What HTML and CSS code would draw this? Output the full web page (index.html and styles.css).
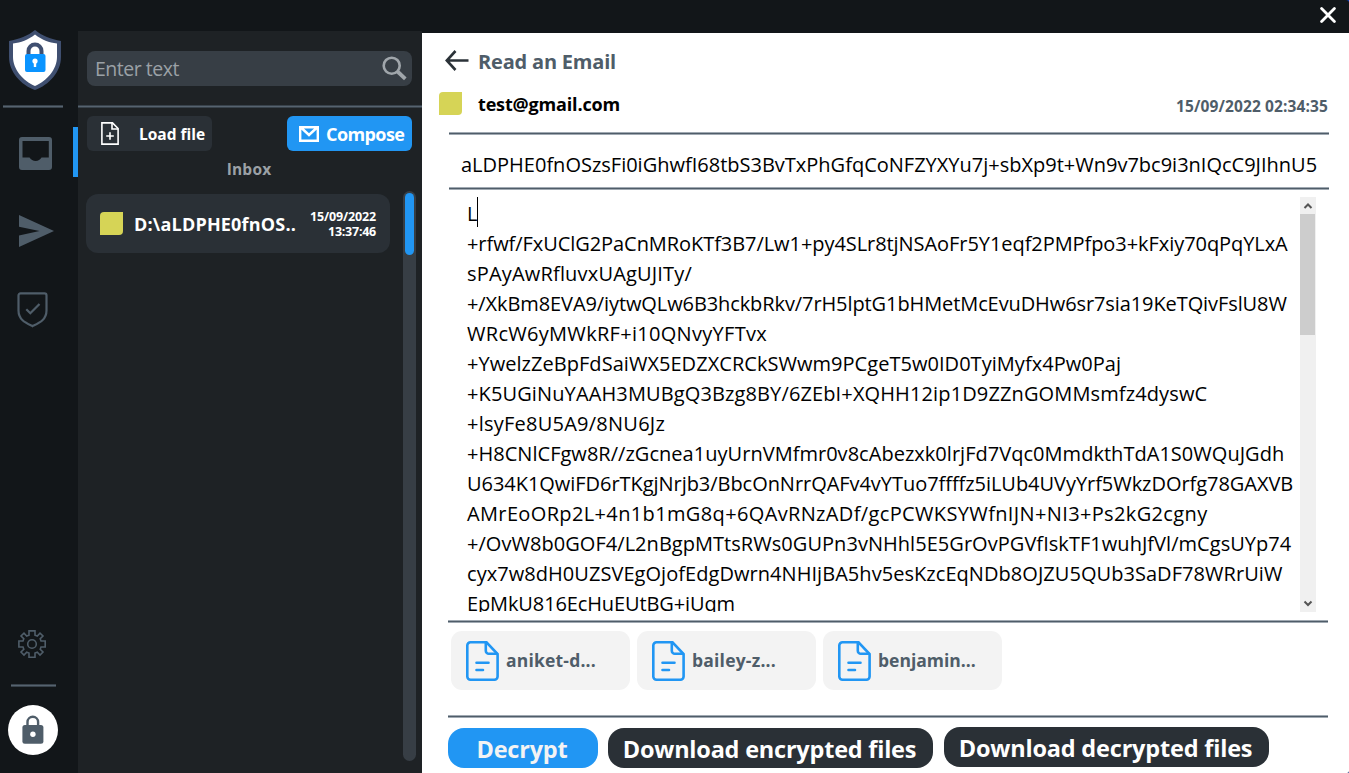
FILE: index.html
```
<!DOCTYPE html>
<html lang="en">
<head>
<meta charset="utf-8">
<title>Read an Email</title>
<link rel="stylesheet" href="styles.css">
</head>
<body>
<div class="app">
  <nav class="sidebar">
    <svg class="logo" viewBox="0 0 52 60" width="52" height="60">
      <path d="M26 0C33 6 42 9 52 11V27C52 42 40 55 26 60C12 55 0 42 0 27V11C10 9 19 6 26 0Z" fill="#3f4f70"/>
      <path d="M26 4.500C33 10 40 12.500 48 13.500V27C48 39 38 51 26 56C14 51 4 39 4 27V13.500C12 12.500 19 10 26 4.500Z" fill="#fff"/>
      <path d="M19.500 25V21a6.500 6.500 0 0 1 13 0V25" fill="none" stroke="#3f4f70" stroke-width="4"/>
      <rect x="16" y="24" width="20.500" height="18" rx="2" fill="#0a94ff"/>
      <circle cx="26" cy="31" r="2.600" fill="#fff"/><rect x="24.800" y="31" width="2.400" height="6" fill="#fff"/>
    </svg>
    <div class="rule rule-top"></div>
    <div class="nav-item active">
      <svg viewBox="0 0 33 33" width="33" height="33"><path fill-rule="evenodd" fill="#4f5d69" d="M3 0H30a3 3 0 0 1 3 3V30a3 3 0 0 1-3 3H3a3 3 0 0 1-3-3V3a3 3 0 0 1 3-3ZM3.500 4V20.500H10.500C12 22.500 14 24 16.700 24S21 22.500 22.500 20.500H29.800V4Z"/></svg>
    </div>
    <div class="nav-item send">
      <svg viewBox="0 0 35 32" width="35" height="32"><path fill="#4f5d69" d="M0 0L35 16L0 32V20.500L20.500 16L0 11.800Z"/></svg>
    </div>
    <div class="nav-item verify">
      <svg viewBox="0 0 31 36" width="31" height="36" fill="none" stroke="#4f5d69" stroke-width="2.200"><path d="M3.500 1.400H27.500a2 2 0 0 1 2 2V18.500C29.500 28 22 31 15.500 34.200C9 31 1.500 28 1.500 18.500V3.400a2 2 0 0 1 2-2Z"/><path d="M9.300 17.200L13.300 21.300L22.500 12"/></svg>
    </div>
    <div class="nav-item gear">
      <svg viewBox="0 0 28 28" width="28" height="28" fill="none" stroke="#4f5d69" stroke-width="1.600"><path d="M11 0.900H17V5.200L19.300 6L22 3.200L25 6L22.200 8.800L23 11H27.200V17H23L22.200 19.200L25 22L22 25L19.300 22.200L17 23V27.200H11V23L8.700 22.200L6 25L3 22L5.800 19.200L5 17H0.900V11H5L5.800 8.800L3 6L6 3.200L8.700 6L11 5.200Z"/><circle cx="14" cy="14" r="4.300"/></svg>
    </div>
    <div class="rule rule-bottom"></div>
    <div class="lock">
      <svg viewBox="0 0 22 29" width="22" height="29"><path d="M5.500 11V7a5.300 5.300 0 0 1 10.600 0V11" fill="none" stroke="#4f5d69" stroke-width="2.400"/><rect x="0.400" y="10" width="21" height="18.700" rx="2.500" fill="#4f5d69"/><circle cx="10.900" cy="19.300" r="2.700" fill="#fff"/></svg>
    </div>
  </nav>

  <section class="list">
    <div class="search">
      <span class="t placeholder">Enter text</span>
      <svg viewBox="0 0 25 25" width="25" height="25" fill="none" stroke="#a0a6ab"><circle cx="9.700" cy="9.700" r="8" stroke-width="2.600"/><path d="M15.500 15.500L23.300 22.800" stroke-width="3.800"/></svg>
    </div>
    <div class="rule rule-list"></div>
    <div class="actions">
      <button class="btn load">
        <svg viewBox="0 0 18 23" width="18" height="23" fill="none" stroke="#fff" stroke-width="1.600"><path d="M0.900 0.900H11.500L17.100 6.500V22.100H0.900Z"/><path d="M11 1V7H17"/><path d="M9 10.300V17.700M5.200 14H12.800"/></svg>
        <span class="t load-t">Load file</span>
      </button>
      <button class="btn compose">
        <svg viewBox="0 0 20 16" width="20" height="16" fill="none" stroke="#fff" stroke-width="2.400"><path d="M1.200 1.200H18.800V14.800H1.200ZM2 1.500L10 9L18 1.500"/></svg>
        <span class="t compose-t">Compose</span>
      </button>
    </div>
    <h2 class="inbox-title"><span class="t inbox-t">Inbox</span></h2>
    <div class="mails">
      <div class="mail">
        <i class="tag"></i>
        <span class="t mail-name">D:\aLDPHE0fnOS..</span>
        <span class="mail-date"><span class="t day">15/09/2022</span><span class="t hour">13:37:46</span></span>
      </div>
      <div class="track"><div class="thumb"></div></div>
    </div>
  </section>

  <div class="right">
    <header class="topbar"><svg viewBox="0 0 16 16" width="16" height="16" stroke="#fff" stroke-width="2.800" stroke-linecap="round"><path d="M1.600 1.600L14.400 14.400M14.400 1.600L1.600 14.400"/></svg></header>
    <main class="reader">
      <div class="title-row">
        <svg viewBox="0 0 24 21" width="24" height="21" fill="none" stroke="#2b3238" stroke-width="2.600"><path d="M23.500 10.500H2M10.500 1L1.800 10.500L10.500 20"/></svg>
        <h1 class="t title">Read an Email</h1>
      </div>
      <div class="from-row">
        <i class="tag"></i>
        <span class="t from">test@gmail.com</span>
        <span class="t date">15/09/2022 02:34:35</span>
      </div>
      <div class="line line-a"></div>
      <div class="subject"><span class="t">aLDPHE0fnOSzsFi0iGhwfI68tbS3BvTxPhGfqCoNFZYXYu7j+sbXp9t+Wn9v7bc9i3nIQcC9JIhnU5</span></div>
      <div class="line line-b"></div>
      <div class="message">
        <div class="text">
          <p><span class="t">L</span><i class="caret"></i></p>
          <p><span class="t m2">+rfwf/FxUClG2PaCnMRoKTf3B7/Lw1+py4SLr8tjNSAoFr5Y1eqf2PMPfpo3+kFxiy70qPqYLxA</span></p>
          <p><span class="t m3">sPAyAwRfluvxUAgUJITy/</span></p>
          <p><span class="t m4">+/XkBm8EVA9/iytwQLw6B3hckbRkv/7rH5lptG1bHMetMcEvuDHw6sr7sia19KeTQivFslU8W</span></p>
          <p><span class="t m5">WRcW6yMWkRF+i10QNvyYFTvx</span></p>
          <p><span class="t m6">+YwelzZeBpFdSaiWX5EDZXCRCkSWwm9PCgeT5w0ID0TyiMyfx4Pw0Paj</span></p>
          <p><span class="t m7">+K5UGiNuYAAH3MUBgQ3Bzg8BY/6ZEbI+XQHH12ip1D9ZZnGOMMsmfz4dyswC</span></p>
          <p><span class="t m8">+lsyFe8U5A9/8NU6Jz</span></p>
          <p><span class="t m9">+H8CNlCFgw8R//zGcnea1uyUrnVMfmr0v8cAbezxk0lrjFd7Vqc0MmdkthTdA1S0WQuJGdh</span></p>
          <p><span class="t m10">U634K1QwiFD6rTKgjNrjb3/BbcOnNrrQAFv4vYTuo7ffffz5iLUb4UVyYrf5WkzDOrfg78GAXVB</span></p>
          <p><span class="t m11">AMrEoORp2L+4n1b1mG8q+6QAvRNzADf/gcPCWKSYWfnIJN+NI3+Ps2kG2cgny</span></p>
          <p><span class="t m12">+/OvW8b0GOF4/L2nBgpMTtsRWs0GUPn3vNHhl5E5GrOvPGVfIskTF1wuhJfVl/mCgsUYp74</span></p>
          <p><span class="t m13">cyx7w8dH0UZSVEgOjofEdgDwrn4NHIjBA5hv5esKzcEqNDb8OJZU5QUb3SaDF78WRrUiW</span></p>
          <p><span class="t m14">EpMkU816EcHuEUtBG+iUqm</span></p>
        </div>
        <div class="scroll">
          <svg viewBox="0 0 16 17" width="16" height="17" fill="none" stroke="#555" stroke-width="2"><path d="M4.500 11L8 7.500L11.500 11"/></svg>
          <div class="scroll-thumb"></div>
          <svg class="down" viewBox="0 0 16 17" width="16" height="17" fill="none" stroke="#555" stroke-width="2"><path d="M4.500 6.500L8 10L11.500 6.500"/></svg>
        </div>
      </div>
      <div class="line line-c"></div>
      <div class="files">
        <div class="file"><svg viewBox="0 0 33 40" width="33" height="40" fill="none" stroke="#2196f3" stroke-width="2.600"><path d="M4.500 1.300H20.500L31.600 13V35.500a3.200 3.200 0 0 1-3.200 3.200H4.500a3.200 3.200 0 0 1-3.200-3.200V4.500a3.200 3.200 0 0 1 3.200-3.200Z"/><path d="M19.800 1.500V9.800a3 3 0 0 0 3 3H31.500"/><path d="M10.500 21.800H22.500M10.500 29H17" stroke-linecap="round"/></svg><span class="t f1">aniket-d...</span></div>
        <div class="file"><svg viewBox="0 0 33 40" width="33" height="40" fill="none" stroke="#2196f3" stroke-width="2.600"><path d="M4.500 1.300H20.500L31.600 13V35.500a3.200 3.200 0 0 1-3.200 3.200H4.500a3.200 3.200 0 0 1-3.200-3.200V4.500a3.200 3.200 0 0 1 3.200-3.200Z"/><path d="M19.800 1.500V9.800a3 3 0 0 0 3 3H31.500"/><path d="M10.500 21.800H22.500M10.500 29H17" stroke-linecap="round"/></svg><span class="t f2">bailey-z...</span></div>
        <div class="file"><svg viewBox="0 0 33 40" width="33" height="40" fill="none" stroke="#2196f3" stroke-width="2.600"><path d="M4.500 1.300H20.500L31.600 13V35.500a3.200 3.200 0 0 1-3.200 3.200H4.500a3.200 3.200 0 0 1-3.200-3.200V4.500a3.200 3.200 0 0 1 3.200-3.200Z"/><path d="M19.800 1.500V9.800a3 3 0 0 0 3 3H31.500"/><path d="M10.500 21.800H22.500M10.500 29H17" stroke-linecap="round"/></svg><span class="t f3">benjamin...</span></div>
      </div>
      <div class="line line-d"></div>
      <div class="buttons">
        <button class="big decrypt"><span class="t b1">Decrypt</span></button>
        <button class="big enc"><span class="t b2">Download encrypted files</span></button>
        <button class="big dec"><span class="t b3">Download decrypted files</span></button>
      </div>
    </main>
  </div>
</div>
</body>
</html>
```
FILE: styles.css
```
* { box-sizing: border-box; }
body { margin: 0; background: #0a3fc4; font-family: "Open Sans", "Noto Sans", sans-serif; }
h1, h2, p { margin: 0; }
svg { display: block; flex: none; }
.t { display: inline-block; white-space: nowrap; flex: none; }
button { border: 0; padding: 0; font-family: inherit; }
.app { display: flex; width: 1349px; height: 773px; background: #121619; overflow: hidden; border-radius: 0 3px 2px 0; }

.sidebar { width: 78px; display: flex; flex-direction: column; padding-top: 30px; flex: none; }
.logo { margin-left: 9px; }
.rule { height: 3px; background: linear-gradient(#38424b 1px, #56636f 1px 2px, #38424b 2px); flex: none; }
.rule-top { width: 60px; margin: 15px 0 0 3px; }
.nav-item { display: flex; align-items: center; flex: none; }
.active { height: 50px; margin-top: 19px; padding: 3px 0 0 19px; border-right: 5px solid #2196f3; }
.send { margin: 38px 0 0 19px; }
.verify { margin: 45px 0 0 17px; }
.gear { margin: 302px 0 0 18px; }
.rule-bottom { width: 45px; margin: 26px 0 0 11px; }
.lock { width: 50px; height: 50px; margin: 18px 0 0 8px; border-radius: 50%; background: #fff; display: flex; justify-content: center; align-items: center; padding-bottom: 1px; flex: none; }

.list { width: 344px; margin-top: 31px; background: #1e2225; flex: none; display: flex; flex-direction: column; }
.search { display: flex; align-items: center; justify-content: space-between; width: 325px; height: 35px; margin: 20px 0 0 9px; padding: 0 5px 0 8px; border-radius: 8px; background: #373e45; }
.placeholder { font-size: 19.500px; line-height: 36px; letter-spacing: -0.480px; color: #9ba1a6; }
.rule-list { margin-top: 19px; }
.actions { display: flex; justify-content: space-between; margin: 8px 10px 0 9px; }
.btn { display: flex; align-items: center; width: 125px; height: 35px; border-radius: 6px; color: #fff; font-weight: 700; }
.load { background: #2a3036; padding-left: 14px; gap: 20px; }
.load-t { font-size: 15.500px; line-height: 35px; padding-top: 2px; }
.compose { background: #2196f3; padding-left: 12px; gap: 7px; }
.compose-t { font-size: 18px; line-height: 37px; letter-spacing: -0.580px; padding-top: 2px; }
.inbox-title { margin-top: 6px; height: 25px; padding-right: 2px; text-align: center; font-size: 15.500px; line-height: 24px; color: #9ba1a6; }
.inbox-t { letter-spacing: 0.200px; }
.mails { display: flex; margin: 9px 6px 0 8px; justify-content: space-between; height: 570px; }
.mail { display: flex; align-items: center; width: 304px; height: 59px; margin-top: 3px; padding-left: 14px; border-radius: 12px; background: #2a3036; color: #fff; font-weight: 700; }
.tag { width: 23px; height: 23px; background: #d6d456; border-radius: 4px 0 4px 0; flex: none; }
.mail-name { width: 163px; font-size: 18px; letter-spacing: 0.190px; margin-left: 11px; }
.mail-date { display: flex; flex-direction: column; align-items: flex-end; width: 79px; font-size: 12.500px; line-height: 15px; }
.day { letter-spacing: -0.150px; }
.hour { letter-spacing: -0.250px; }
.track { width: 13px; padding: 2px; border-radius: 6.500px; background: #373e45; }
.thumb { width: 9px; height: 62px; border-radius: 4.500px; background: #2196f3; }

.right { flex: 1; display: flex; flex-direction: column; }
.topbar { height: 33px; display: flex; justify-content: flex-end; padding: 7px 13px 0 0; flex: none; }
.reader { flex: 1; background: #fff; overflow: hidden; }
.title-row { display: flex; align-items: center; height: 28px; margin: 14px 0 0 23px; gap: 9px; }
.title-row svg { margin-top: -2px; }
.title { font-size: 20px; line-height: 28px; letter-spacing: -0.192px; color: #4f5d69; padding-top: 1px; }
.from-row { display: flex; align-items: center; height: 23px; margin: 17px 21px 0 17px; }
.from { font-size: 18px; font-weight: 700; letter-spacing: -0.162px; margin-left: 16px; }
.date { font-size: 15.500px; font-weight: 700; letter-spacing: 0.120px; color: #4f5d69; margin-left: auto; line-height: 23px; padding-top: 6px; }
.line { height: 3px; width: 880px; margin-left: 26px; background: linear-gradient(#a0a9b2 1px, #4f5d69 1px 2px, #a0a9b2 2px); }
.line-a, .line-b { margin-left: 27px; }
.line-a { margin-top: 17px; }
.subject { width: 856px; height: 30px; margin: 15px 0 0 39px; overflow: hidden; font-size: 20px; line-height: 30px; white-space: nowrap; }
.line-b { margin-top: 7px; }
.message { display: flex; height: 415px; width: 850px; margin: 7px 0 0 44px; }
.text { flex: 1; overflow: hidden; padding-top: 2px; font-size: 20px; }
.text p { height: 30px; line-height: 30px; white-space: nowrap; position: relative; padding-left: 1px; }
.m2 { letter-spacing: -0.062px; }
.m3 { letter-spacing: 0.180px; }
.m4 { letter-spacing: -0.095px; }
.m5 { letter-spacing: 0.296px; }
.m6 { letter-spacing: 0.040px; }
.m7 { letter-spacing: 0.125px; }
.m8 { letter-spacing: 0.240px; }
.m9 { letter-spacing: 0.030px; }
.m10 { letter-spacing: -0.045px; }
.m11 { letter-spacing: 0.360px; }
.m12 { letter-spacing: 0.042px; }
.m13 { letter-spacing: 0.050px; }
.m14 { letter-spacing: -0.120px; }
.caret { position: absolute; left: 11px; top: -2px; width: 1px; height: 30px; background: #000; }
.scroll { width: 16px; background: #f0f0f0; display: flex; flex-direction: column; flex: none; }
.scroll-thumb { width: 15px; height: 121px; background: #cdcdcd; }
.down { margin-top: auto; }
.line-c { margin-top: 8px; }
.files { display: flex; gap: 7px; margin: 8px 0 0 29px; }
.file { display: flex; align-items: center; width: 179px; height: 59px; padding-left: 15px; gap: 7px; border-radius: 11px; background: #f3f3f3; color: #4f5d69; font-size: 17.500px; font-weight: 700; }
.file .t { padding-bottom: 2px; }
.f1 { letter-spacing: 0.190px; }
.f2 { letter-spacing: 0.200px; }
.line-d { margin-top: 25px; }
.buttons { display: flex; margin: 10px 0 0 26px; }
.big { height: 40px; border-radius: 16px; background: #2a3036; color: #fff; font-size: 23.500px; font-weight: 700; line-height: 40px; padding-right: 2px; }
.big .t { padding-top: 3px; line-height: 37px; vertical-align: top; }
.decrypt { width: 150px; background: #2196f3; color: #f3f3f3; }
.enc { width: 325px; margin-left: 10px; }
.dec { width: 325px; margin: -1px 0 0 11px; }
.b1 { letter-spacing: -0.212px; }
.b2 { letter-spacing: -0.220px; }
.b3 { letter-spacing: -0.190px; }
```
